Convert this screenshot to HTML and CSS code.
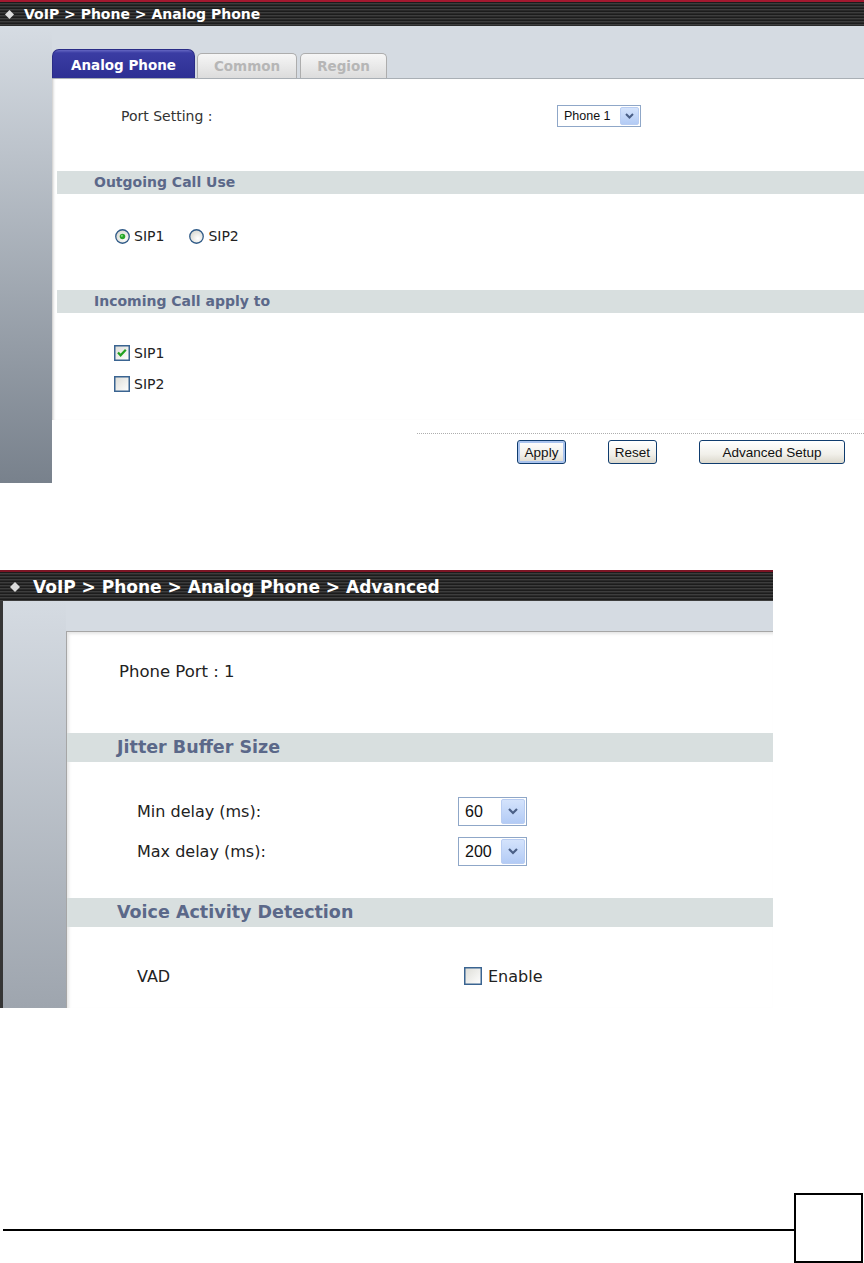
FILE: index.html
```html
<!DOCTYPE html>
<html lang="en">
<head>
    <meta charset="UTF-8">
    <meta name="viewport" content="width=device-width, initial-scale=1.0">
    <title>VoIP - Analog Phone</title>
    <link rel="stylesheet" href="styles.css">
</head>
<body>
    <!-- Analog Phone page -->
    <div class="shot shot-tabs">
        <div class="crumb">
            <svg width="9" height="9" viewBox="0 0 9 9"><polygon points="4.5,0 9,4.5 4.5,9 0,4.5" fill="#dcdcdc"/></svg>
            VoIP &gt; Phone &gt; Analog Phone
        </div>
        <div class="frame">
            <div class="side"></div>
            <div class="work">
                <div class="tabs">
                    <div class="tab tab-on">Analog Phone</div>
                    <div class="tab tab-common">Common</div>
                    <div class="tab tab-region">Region</div>
                </div>
                <div class="panel">
                    <div class="port-row">
                        <div class="lbl">Port Setting :</div>
                        <span class="pick pick-port">
                            <span class="pick-val">Phone 1</span>
                            <span class="pick-btn"><svg width="9" height="6" viewBox="0 0 9 6"><polyline points="1,1 4.5,4.5 8,1" fill="none" stroke="#4a5f86" stroke-width="2"/></svg></span>
                        </span>
                    </div>

                    <div class="bar">Outgoing Call Use</div>
                    <div class="radios">
                        <label class="opt">
                            <svg width="15" height="15" viewBox="0 0 14 14">
                                <defs><radialGradient id="rg1" cx="0.6" cy="0.65" r="0.7"><stop offset="0" stop-color="#ffffff"/><stop offset="1" stop-color="#d6d6ce"/></radialGradient></defs>
                                <circle cx="7" cy="7" r="6.3" fill="url(#rg1)" stroke="#2f5a87" stroke-width="1.2"/>
                                <circle cx="7" cy="7" r="2.6" fill="#2aa52a"/>
                                <circle cx="6.4" cy="6.4" r="1" fill="#7fdc7f"/>
                            </svg>
                            SIP1
                        </label>
                        <label class="opt">
                            <svg width="15" height="15" viewBox="0 0 14 14">
                                <circle cx="7" cy="7" r="6.3" fill="url(#rg1)" stroke="#2f5a87" stroke-width="1.2"/>
                            </svg>
                            SIP2
                        </label>
                    </div>

                    <div class="bar">Incoming Call apply to</div>
                    <div class="checks">
                        <label class="opt">
                            <svg width="16" height="16" viewBox="0 0 16 16">
                                <defs><linearGradient id="cg1" x1="0" y1="0" x2="1" y2="1"><stop offset="0" stop-color="#dcdcd6"/><stop offset="1" stop-color="#ffffff"/></linearGradient></defs>
                                <rect x="0.75" y="0.75" width="14.5" height="14.5" fill="url(#cg1)" stroke="#3a6491" stroke-width="1.5"/>
                                <polyline points="4,7.5 6.6,10.3 11.8,4.8" fill="none" stroke="#21a121" stroke-width="2.2"/>
                            </svg>
                            SIP1
                        </label>
                        <label class="opt">
                            <svg width="16" height="16" viewBox="0 0 16 16">
                                <rect x="0.75" y="0.75" width="14.5" height="14.5" fill="url(#cg1)" stroke="#3a6491" stroke-width="1.5"/>
                            </svg>
                            SIP2
                        </label>
                    </div>
                </div>
                <div class="actions">
                    <div class="dots"></div>
                    <div class="buttons">
                        <button class="btn btn-apply">Apply</button>
                        <button class="btn btn-reset">Reset</button>
                        <button class="btn btn-adv">Advanced Setup</button>
                    </div>
                </div>
            </div>
        </div>
    </div>

    <!-- Advanced page -->
    <div class="shot shot-adv">
        <div class="crumb crumb-adv">
            <svg width="10" height="10" viewBox="0 0 10 10"><polygon points="5,0 10,5 5,10 0,5" fill="#dcdcdc"/></svg>
            VoIP &gt; Phone &gt; Analog Phone &gt; Advanced
        </div>
        <div class="frame frame-adv">
            <div class="side side-adv"></div>
            <div class="work">
                <div class="band"></div>
                <div class="sheet">
                    <div class="port-info">Phone Port : 1</div>

                    <div class="bar bar-adv">Jitter Buffer Size</div>
                    <div class="field">
                        <div class="lbl">Min delay (ms):</div>
                        <span class="pick pick-big">
                            <span class="pick-val">60</span>
                            <span class="pick-btn"><svg width="10" height="7" viewBox="0 0 10 7"><polyline points="1,1 5,5 9,1" fill="none" stroke="#4a5f86" stroke-width="2.2"/></svg></span>
                        </span>
                    </div>
                    <div class="field field-next">
                        <div class="lbl">Max delay (ms):</div>
                        <span class="pick pick-big">
                            <span class="pick-val">200</span>
                            <span class="pick-btn"><svg width="10" height="7" viewBox="0 0 10 7"><polyline points="1,1 5,5 9,1" fill="none" stroke="#4a5f86" stroke-width="2.2"/></svg></span>
                        </span>
                    </div>

                    <div class="bar bar-adv bar-vad">Voice Activity Detection</div>
                    <div class="field field-vad">
                        <div class="lbl">VAD</div>
                        <label class="opt opt-vad">
                            <svg width="18" height="18" viewBox="0 0 18 18">
                                <rect x="0.75" y="0.75" width="16.5" height="16.5" fill="url(#cg1)" stroke="#3a6491" stroke-width="1.5"/>
                            </svg>
                            Enable
                        </label>
                    </div>
                </div>
            </div>
        </div>
    </div>

    <div class="page-foot">
        <div class="rule"></div>
        <div class="page-box"></div>
    </div>
</body>
</html>
```

FILE: styles.css
```css
body {
    margin: 0;
    background: #fff;
    font-family: "DejaVu Sans", Verdana, sans-serif;
    color: #222;
}

.shot {
    overflow: hidden;
}
.shot-tabs {
    width: 864px;
    height: 483px;
}
.shot-adv {
    width: 773px;
    height: 438px;
    margin-top: 87px;
}

/* dark striped title bar */
.crumb {
    display: flex;
    align-items: center;
    height: 24px;
    padding-left: 5px;
    border-top: 2px solid #a3182f;
    background: repeating-linear-gradient(#1c1c1c 0 1px, #3d3d3d 1px 2px, #2a2a2a 2px 3px);
    color: #fff;
    font-size: 14px;
    font-weight: bold;
    white-space: nowrap;
}
.crumb svg {
    margin-right: 10px;
}
.crumb-adv {
    height: 29px;
    padding-left: 10px;
    border-top-color: #7c1424;
    font-size: 17px;
}
.crumb-adv svg {
    margin-right: 13px;
}

.frame {
    display: flex;
    height: 457px;
}
.side {
    width: 52px;
    background: linear-gradient(#d6dce3, #78818c);
}
.work {
    flex: 1;
    display: flex;
    flex-direction: column;
}

/* tabs */
.tabs {
    display: flex;
    align-items: flex-end;
    gap: 2px;
    height: 52px;
    background: #d5dbe2;
    border-bottom: 1px solid #a9afb5;
}
.tab {
    box-sizing: border-box;
    height: 25px;
    font-size: 13.5px;
    font-weight: bold;
    text-align: center;
    line-height: 24px;
    color: #b6b6b6;
    background: linear-gradient(#f6f6f6, #dcdcdc);
    border: 1px solid #adadad;
    border-bottom: none;
    border-radius: 5px 5px 0 0;
}
.tab-on {
    width: 143px;
    height: 29px;
    line-height: 30px;
    color: #fff;
    background: linear-gradient(#6466c2 0, #3a3ca3 3px, #2e3093 100%);
    border-color: #2a2c86;
    border-radius: 7px 7px 0 0;
}
.tab-common {
    width: 100px;
}
.tab-region {
    width: 87px;
    margin-left: 1px;
}

.panel {
    height: 341px;
    background: #fff;
    box-shadow: inset 3px 0 3px -2px rgba(0, 0, 0, 0.25);
    font-size: 14px;
}

.port-row {
    display: flex;
    align-items: center;
    height: 22px;
    margin-top: 26px;
}
.port-row .lbl {
    box-sizing: border-box;
    width: 505px;
    padding-left: 69px;
    color: #333;
}

/* XP style drop down */
.pick {
    box-sizing: border-box;
    display: inline-flex;
    align-items: stretch;
    padding: 1px;
    background: #fff;
    border: 1px solid #8fa7c8;
    font-family: "Liberation Sans", Arial, sans-serif;
    color: #111;
}
.pick-val {
    flex: 1;
    display: flex;
    align-items: center;
    padding-left: 5px;
}
.pick-btn {
    display: flex;
    align-items: center;
    justify-content: center;
    border: 1px solid #b9cdf2;
    border-radius: 2px;
    background: linear-gradient(#d4e3fc, #b3cbf5);
}
.pick-port {
    width: 84px;
    height: 22px;
    font-size: 12.5px;
}
.pick-port .pick-btn {
    width: 17px;
}
.pick-big {
    width: 69px;
    height: 29px;
    font-size: 16px;
}
.pick-big .pick-btn {
    width: 22px;
}

/* section bars */
.bar {
    height: 23px;
    margin: 44px 0 0 5px;
    padding-left: 37px;
    background: #d8dfdf;
    color: #5b6889;
    font-size: 14px;
    font-weight: bold;
    line-height: 23px;
}

.opt {
    display: flex;
    align-items: center;
    gap: 5px;
    color: #222;
}
.radios {
    display: flex;
    align-items: center;
    height: 20px;
    margin-top: 32px;
    padding-left: 63px;
}
.radios .opt {
    gap: 4px;
}
.radios .opt + .opt {
    margin-left: 25px;
}
.checks {
    display: flex;
    flex-direction: column;
    gap: 14px;
    margin-top: 31px;
    padding-left: 62px;
}
.checks .opt {
    height: 17px;
    gap: 4px;
}

/* buttons row */
.actions {
    flex: 1;
    background: #fff;
}
.dots {
    margin: 13px 0 0 365px;
    border-top: 1px dotted #aeaeae;
}
.buttons {
    display: flex;
    justify-content: flex-end;
    gap: 42px;
    margin-top: 6px;
    padding-right: 19px;
}
.btn {
    height: 24px;
    padding: 0;
    font-family: "Liberation Sans", Arial, sans-serif;
    font-size: 13.5px;
    color: #111;
    background: linear-gradient(#ffffff, #f1f0ea 60%, #dcd8cc);
    border: 1px solid #0f3c6e;
    border-radius: 3px;
}
.btn-apply {
    width: 49px;
    box-shadow: inset 0 0 0 2px #a9c3ee;
}
.btn-reset {
    width: 49px;
}
.btn-adv {
    width: 146px;
}

/* advanced page */
.frame-adv {
    height: 407px;
}
.side-adv {
    width: 66px;
    background: linear-gradient(to right, #353535 0 3px, transparent 3px), linear-gradient(#d5dbe2, #9ea5ae);
}
.band {
    height: 30px;
    background: #d5dbe2;
}
.sheet {
    flex: 1;
    background: #fff;
    border-top: 1px solid #a6a6a6;
    border-left: 1px solid #a6a6a6;
    box-shadow: inset 2px 2px 3px rgba(0, 0, 0, 0.1);
    font-size: 16px;
}
.port-info {
    height: 20px;
    line-height: 20px;
    padding: 30px 0 0 52px;
    color: #222;
    font-size: 16.5px;
}
.bar-adv {
    height: 29px;
    margin: 51px 0 0 0;
    padding-left: 50px;
    font-size: 17.5px;
    line-height: 29px;
}
.bar-vad {
    margin-top: 32px;
}
.field {
    display: flex;
    align-items: center;
    height: 29px;
    margin-top: 35px;
}
.field .lbl {
    box-sizing: border-box;
    width: 391px;
    padding-left: 70px;
}
.field-next {
    margin-top: 11px;
}
.field-vad {
    height: 18px;
    margin-top: 40px;
}
.opt-vad {
    margin-left: 6px;
    gap: 6px;
    font-size: 16px;
}

/* page footer */
.page-foot {
    display: flex;
    align-items: flex-start;
    margin: 185px 1px 0 3px;
}
.rule {
    flex: 1;
    height: 2px;
    margin-top: 36px;
    background: #000;
}
.page-box {
    box-sizing: border-box;
    width: 69px;
    height: 70px;
    border: 2px solid #000;
}
```
